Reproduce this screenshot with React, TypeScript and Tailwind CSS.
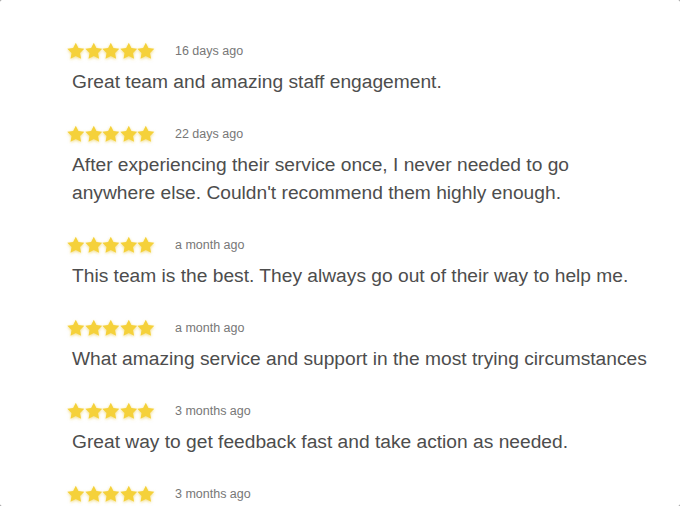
const reviews = [
  { when: "16 days ago", text: "Great team and amazing staff engagement." },
  {
    when: "22 days ago",
    text: "After experiencing their service once, I never needed to go anywhere else. Couldn't recommend them highly enough.",
  },
  { when: "a month ago", text: "This team is the best. They always go out of their way to help me." },
  { when: "a month ago", text: "What amazing service and support in the most trying circumstances" },
  { when: "3 months ago", text: "Great way to get feedback fast and take action as needed." },
  { when: "3 months ago", text: "" },
];

function Star() {
  return (
    <svg viewBox="0 0 24 24" className="h-[18px] w-[17.6px] drop-shadow-[0_1px_1.5px_rgba(230,190,20,0.55)]">
      <path
        d="M12 0.6l3.6 7.3 8 1.1-5.8 5.6 1.4 8L12 18.8l-7.2 3.8 1.4-8L0.4 9l8-1.1z"
        fill="#f5d13a"
      />
    </svg>
  );
}

export default function App() {
  return (
    <div className="h-[506px] w-[680px] overflow-hidden bg-[#8a8a8a]">
      <div className="h-full w-full overflow-hidden rounded-[2px] bg-white pl-[67px] pt-[41px] font-['Liberation_Sans',Arial,sans-serif]">
        {reviews.map((r, i) => (
          <div key={i} className="mb-[28px]">
            {/* stars + date */}
            <div className="mb-[7px] flex h-[20px] items-center">
              <div className="flex">
                <Star />
                <Star />
                <Star />
                <Star />
                <Star />
              </div>
              <span className="ml-[20px] text-[12.5px] text-[#777]">{r.when}</span>
            </div>
            {r.text && (
              <p className="w-[585px] pl-[5px] text-[19.2px] leading-[28px] text-[#4d4d4d]">{r.text}</p>
            )}
          </div>
        ))}
      </div>
    </div>
  );
}
